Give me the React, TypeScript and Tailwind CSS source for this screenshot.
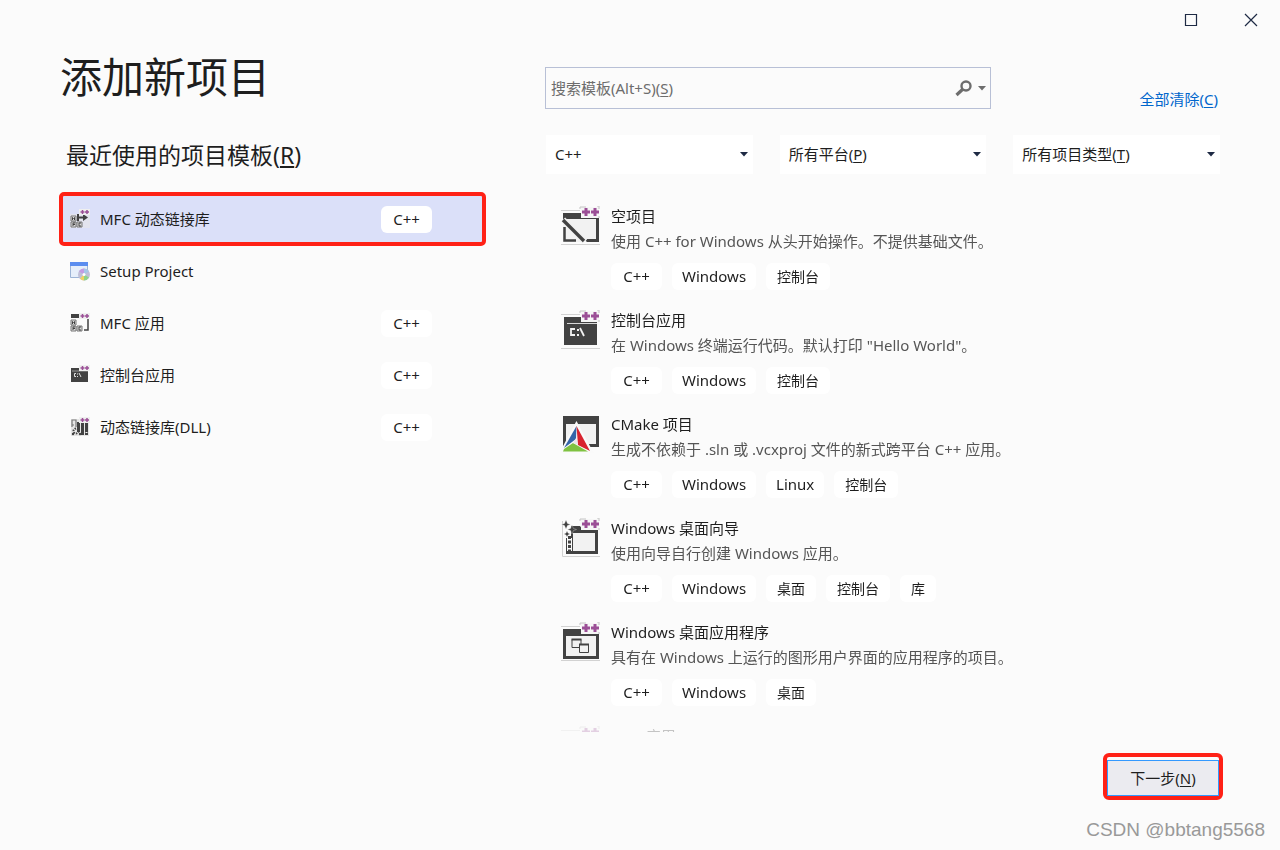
import type { ReactNode } from 'react';

const DARK = '#424242';
const PALE = '#f2f2f2';

function Key({ children }: { children: ReactNode }) {
  return <span className="underline underline-offset-2">{children}</span>;
}

function Pluses() {
  return (
    <>
      <path d="M20 1h18v11H20z" fill="#f6f6f6" />
      <path d="M19 3V1h6M36 0h2v3M38 10v2" fill="none" stroke="#c4c4c4" strokeWidth="1" />
      <path d="M25 2v8M21 6h8M34 2v8M30 6h8" stroke="#9b4f96" strokeWidth="3" />
    </>
  );
}

function Guides() {
  return <path d="M0 4.500h19M0 38.500h39" stroke="#d2d2d2" strokeWidth="1" />;
}

function EmptyIcon() {
  return (
    <svg width="40" height="40" viewBox="0 0 40 40">
      <Guides />
      <path d="M2 7h18l3 5h15v24H2z" fill={DARK} />
      <path d="M5 13h30v20H5z" fill={PALE} />
      <path d="M2 14v22h24z" fill={PALE} />
      <path d="M3.500 21v13.500H15" fill="none" stroke={DARK} strokeWidth="2.500" />
      <path d="M2 13.500l22 22" stroke={PALE} strokeWidth="6" />
      <path d="M2 14l21 21" stroke={DARK} strokeWidth="3.400" />
      <Pluses />
    </svg>
  );
}

function ConsoleIcon() {
  return (
    <svg width="40" height="40" viewBox="0 0 40 40">
      <Guides />
      <path d="M3 7h33v28H3z" fill={DARK} />
      <path d="M6 13.500h30" stroke="#d8d8d8" strokeWidth="1" />
      <path d="M14 19h-4v6h4M19 18l4 8" fill="none" stroke={PALE} strokeWidth="1.800" />
      <path d="M16 19h2v2h-2zM16 24h2v2h-2z" fill={PALE} />
      <Pluses />
    </svg>
  );
}

function CMakeIcon() {
  return (
    <svg width="40" height="40" viewBox="0 0 40 40">
      <path d="M2 2h36v31H2z" fill={DARK} />
      <path d="M5 10h30v20H5z" fill={PALE} />
      <path d="M15.500 9 0 38h31z" fill="#fafafa" stroke="#fafafa" strokeWidth="2" />
      <path d="M15.500 12 3 34l12-9z" fill="#3465a9" />
      <path d="M15.500 12 29 37 17 31z" fill="#d8232f" />
      <path d="M3 35l9-6 15 8.500H2z" fill="#7fc241" />
      <path d="M15 24l2 7-5-2z" fill="#e8e8e8" />
    </svg>
  );
}

function WizardIcon() {
  return (
    <svg width="40" height="40" viewBox="0 0 40 40">
      <path d="M1.500 3v35.500H39" fill="none" stroke="#d2d2d2" strokeWidth="1" />
      <path d="M10 8h9l3 4h15v24H5V20h5z" fill={DARK} />
      <path d="M12 15h22v18H12z" fill={PALE} />
      <path d="M6 20h5v13H6z" fill="#fafafa" />
      <path d="M8.500 18v16" stroke={DARK} strokeWidth="3" strokeDasharray="3 1.500" />
      <path
        d="M5 2l1.500 3.500 3 1-3 1L5 11 3.500 7.500l-3-1 3-1zM11 7l1.500 3.500 3 1-3 1L11 16l-1.500-3.500-3-1 3-1zM6 13l1 2 2 1-2 1-1 2-1-2-2-1 2-1z"
        fill={DARK}
        stroke="#fafafa"
        strokeWidth="0.300"
      />
      <Pluses />
    </svg>
  );
}

function DesktopIcon() {
  return (
    <svg width="40" height="40" viewBox="0 0 40 40">
      <Guides />
      <path d="M2 7h18l3 5h15v25H2z" fill={DARK} />
      <path d="M5 14h30v20H5z" fill={PALE} />
      <path d="M11 17.500h9v8h-9z" fill={PALE} stroke={DARK} strokeWidth="1" />
      <path d="M10.500 17.500h10" stroke={DARK} strokeWidth="2" />
      <path d="M18.500 22.500h9v8h-9z" fill={PALE} stroke={DARK} strokeWidth="1" />
      <path d="M18 22.500h10" stroke={DARK} strokeWidth="2" />
      <Pluses />
    </svg>
  );
}

function SmallPluses() {
  return (
    <>
      <path d="M9 0h11v6H9z" fill="#efefef" />
      <path d="M12.500 1v4M10.500 3h4M17 1v4M15 3h4" stroke="#9b4f96" strokeWidth="1.500" />
    </>
  );
}

function MfcLetters() {
  return (
    <>
      <path d="M1 7h5v5H1zM1 13h5v5H1zM7 13h5v5H7z" fill="#dedede" stroke="#777" strokeWidth="1" />
      <path d="M2.500 11V8.500l1 1 1-1V11M3 17v-3h2M3 15.500h2M11 14H9v3h2" fill="none" stroke={DARK} strokeWidth="1" />
    </>
  );
}

function MfcDllIcon() {
  return (
    <svg width="20" height="20" viewBox="0 0 20 20">
      <path d="M0 5h20v14H0z" fill="#e3e4ee" />
      <MfcLetters />
      <path d="M8 5v7M7 8.500h8" stroke={DARK} strokeWidth="2" />
      <path d="M13 5l5 3.500-5 3.500z" fill={DARK} />
      <SmallPluses />
    </svg>
  );
}

function SetupIcon() {
  return (
    <svg width="20" height="20" viewBox="0 0 20 20">
      <path d="M.5 1.500h17v15H.5z" fill="#e6eefa" stroke="#9db4d6" strokeWidth="1" />
      <path d="M0 1h18v4H0z" fill="#5b8def" />
      <circle cx="14" cy="13.500" r="6" fill="#bfbfd6" />
      <path d="M14 13.500 9 10.500a6 6 0 0 1 5-3z" fill="#c39be3" />
      <path d="M14 13.500V7.500a6 6 0 0 1 5 3z" fill="#a5c6e8" />
      <path d="M14 13.500l5 3a6 6 0 0 1-5 3z" fill="#8fd48b" />
      <path d="M14 13.500v6a6 6 0 0 1-4-2z" fill="#f0d264" />
      <circle cx="14" cy="13.500" r="1.500" fill="#fff" />
    </svg>
  );
}

function MfcAppIcon() {
  return (
    <svg width="20" height="20" viewBox="0 0 20 20">
      <path d="M1 1h9v4H1z" fill={DARK} />
      <path d="M18 6v11h-4" fill="none" stroke={DARK} strokeWidth="1.500" />
      <MfcLetters />
      <SmallPluses />
    </svg>
  );
}

function SmallConsoleIcon() {
  return (
    <svg width="20" height="20" viewBox="0 0 20 20">
      <path d="M1 3h17v14H1z" fill={DARK} />
      <path d="M2 6h16" stroke="#bbb" strokeWidth="0.700" />
      <path d="M6 8.500H4.500v3H6M9 8l2 4" fill="none" stroke="#e0e0e0" strokeWidth="1" />
      <path d="M7 8.500h1v1H7zM7 11h1v1H7z" fill="#e0e0e0" />
      <SmallPluses />
    </svg>
  );
}

function DllIcon() {
  return (
    <svg width="20" height="20" viewBox="0 0 20 20">
      <path d="M1 2h18v17H1z" fill="#e6e6e6" />
      <path d="M2 10V3h4v7M2 8h2" fill="none" stroke="#777" strokeWidth="1.200" />
      <path d="M7 5h3v10H7zM11 6h3v12h-3zM15 6h3v12h-3z" fill={DARK} />
      <path d="M15.500 15h2v1h-2z" fill="#eee" />
      <circle cx="6" cy="14" r="2.500" fill="none" stroke={DARK} strokeWidth="2" strokeDasharray="1.500 1" />
      <circle cx="3" cy="17" r="1.200" fill={DARK} />
      <circle cx="10" cy="17" r="1.200" fill={DARK} />
      <SmallPluses />
    </svg>
  );
}

const recent = [
  { name: 'MFC 动态链接库', tag: 'C++', icon: <MfcDllIcon />, selected: true },
  { name: 'Setup Project', tag: '', icon: <SetupIcon />, selected: false },
  { name: 'MFC 应用', tag: 'C++', icon: <MfcAppIcon />, selected: false },
  { name: '控制台应用', tag: 'C++', icon: <SmallConsoleIcon />, selected: false },
  { name: '动态链接库(DLL)', tag: 'C++', icon: <DllIcon />, selected: false },
];

const templates = [
  {
    name: '空项目',
    text: '使用 C++ for Windows 从头开始操作。不提供基础文件。',
    tags: ['C++', 'Windows', '控制台'],
    icon: <EmptyIcon />,
  },
  {
    name: '控制台应用',
    text: '在 Windows 终端运行代码。默认打印 "Hello World"。',
    tags: ['C++', 'Windows', '控制台'],
    icon: <ConsoleIcon />,
  },
  {
    name: 'CMake 项目',
    text: '生成不依赖于 .sln 或 .vcxproj 文件的新式跨平台 C++ 应用。',
    tags: ['C++', 'Windows', 'Linux', '控制台'],
    icon: <CMakeIcon />,
  },
  {
    name: 'Windows 桌面向导',
    text: '使用向导自行创建 Windows 应用。',
    tags: ['C++', 'Windows', '桌面', '控制台', '库'],
    icon: <WizardIcon />,
  },
  {
    name: 'Windows 桌面应用程序',
    text: '具有在 Windows 上运行的图形用户界面的应用程序的项目。',
    tags: ['C++', 'Windows', '桌面'],
    icon: <DesktopIcon />,
  },
  { name: 'MFC 应用', text: '', tags: [], icon: <DesktopIcon /> },
];

function Tag({ children }: { children: string }) {
  const latin = /^[A-Z]/.test(children);
  return (
    <span
      className={
        latin
          ? 'h-[27px] min-w-[51px] rounded-md bg-white px-2.5 text-center text-[15px] leading-[27px]'
          : 'h-[27px] rounded-md bg-white px-[11px] text-sm leading-[27px]'
      }
    >
      {children}
    </span>
  );
}

function Caret() {
  return (
    <svg width="8" height="5" viewBox="0 0 8 5">
      <path d="M0 0h8L4 4.500z" fill="currentColor" />
    </svg>
  );
}

type FilterProps = { id: string; name: string; label?: ReactNode; options: string[] };

function Filter({ id, name, label, options }: FilterProps) {
  return (
    <div className="relative flex h-[39px] items-center bg-white">
      <select
        id={id}
        aria-label={name}
        className="h-full w-full appearance-none bg-transparent px-[9px] text-[15px] outline-none"
      >
        {options.map((o) => (
          <option key={o}>{o}</option>
        ))}
      </select>
      {label && (
        <label htmlFor={id} className="pointer-events-none absolute left-[9px]">
          {label}
        </label>
      )}
      <span className="pointer-events-none absolute right-[5px] text-[#1e2a44]">
        <Caret />
      </span>
    </div>
  );
}

export default function App() {
  return (
    <div className="flex h-screen flex-col bg-[#fbfbfb] font-['Noto_Sans','Noto_Sans_CJK_SC',sans-serif] text-[15px] text-[#1e1e1e]">
      <header className="flex h-10 shrink-0 justify-end gap-0.5 text-[#1e2a44]">
        <button aria-label="最大化" className="flex w-[58px] items-center justify-center">
          <svg width="14" height="14" viewBox="0 0 14 14">
            <path d="M1.500 1.500h11v11h-11z" fill="none" stroke="currentColor" strokeWidth="1.200" />
          </svg>
        </button>
        <button aria-label="关闭" className="flex w-[58px] items-center justify-center">
          <svg width="14" height="14" viewBox="0 0 14 14">
            <path d="M1 1l12 12M13 1L1 13" stroke="currentColor" strokeWidth="1.200" />
          </svg>
        </button>
      </header>

      <main className="grid min-h-0 flex-1 grid-cols-[425fr_675fr] gap-[60px] px-[60px]">
        <section>
          <h1 className="mt-[7px] text-[42px] leading-[60px]">添加新项目</h1>
          <h2 className="mt-7 pl-1.5 text-[23px] leading-10">
            最近使用的项目模板(<Key>R</Key>)
          </h2>
          <ul className="mt-[18px]">
            {recent.map((r) => (
              <li key={r.name}>
                <button
                  className={
                    r.selected
                      ? 'flex h-[52px] w-full items-center rounded-sm bg-[#dbe0f9] pr-[53px] pl-2.5 outline-4 -outline-offset-3 outline-[#ff2116]'
                      : 'flex h-[52px] w-full items-center pr-[53px] pl-2.5'
                  }
                >
                  {r.icon}
                  <span className="ml-2.5 flex-1 text-left">{r.name}</span>
                  {r.tag && <Tag>{r.tag}</Tag>}
                </button>
              </li>
            ))}
          </ul>
        </section>

        <section className="flex min-h-0 flex-col">
          <div className="mt-[27px] flex h-[42px] justify-between">
            <div className="relative flex w-[446px] items-center border border-[#b8c0d6] text-[#6d6d6d]">
              <input id="search" placeholder=" " className="peer h-full min-w-0 flex-1 px-[5px] outline-none" />
              <label
                htmlFor="search"
                className="pointer-events-none invisible absolute left-[5px] peer-placeholder-shown:visible"
              >
                搜索模板(Alt+S)(<Key>S</Key>)
              </label>
              <button aria-label="搜索" className="flex items-center gap-1.5 pr-1">
                <svg width="17" height="17" viewBox="0 0 17 17">
                  <circle cx="11" cy="6" r="4.500" fill="none" stroke="currentColor" strokeWidth="2.400" />
                  <path d="M8 9 1.500 15" stroke="currentColor" strokeWidth="3.200" />
                </svg>
                <Caret />
              </button>
            </div>
            <a href="#clear" className="mt-[21px] mr-0.5 leading-[22px] text-[#0066cc]">
              全部清除(<Key>C</Key>)
            </a>
          </div>

          <div className="mt-[26px] grid grid-cols-3 gap-[27px] pl-px">
            <Filter id="language" name="语言" options={['C++', '所有语言']} />
            <Filter id="platform" name="所有平台" label={<>所有平台(<Key>P</Key>)</>} options={['', 'Windows', 'Linux']} />
            <Filter
              id="type"
              name="所有项目类型"
              label={<>所有项目类型(<Key>T</Key>)</>}
              options={['', '桌面', '控制台', '库']}
            />
          </div>

          <ul className="mt-[30px] min-h-0 flex-1 overflow-hidden pl-4 [mask-image:linear-gradient(to_top,rgba(0,0,0,0.25)_8px,black_14px)]">
            {templates.map((t) => (
              <li key={t.name} className="flex h-[104px] gap-2.5">
                <div className="mt-0.5 shrink-0">{t.icon}</div>
                <div>
                  <h3 className="leading-[25px]">{t.name}</h3>
                  <p className="leading-[25px] text-[#555555]">{t.text}</p>
                  <div className="mt-[9px] flex gap-2.5">
                    {t.tags.map((tag) => (
                      <Tag key={tag}>{tag}</Tag>
                    ))}
                  </div>
                </div>
              </li>
            ))}
          </ul>
        </section>
      </main>

      <footer className="flex h-[118px] shrink-0 flex-col items-end">
        <div className="mt-[21px] mr-[57px] flex h-[47px] w-[120px] rounded-md border-4 border-[#ff2116] pt-[3px]">
          <button className="flex-1 border border-[#3399ff] bg-[#ebebf0]">
            下一步(<Key>N</Key>)
          </button>
        </div>
        <p className="mt-4 mr-[15px] font-['Liberation_Sans',sans-serif] text-[19px] leading-7 text-[#999999]">
          CSDN @bbtang5568
        </p>
      </footer>
    </div>
  );
}
